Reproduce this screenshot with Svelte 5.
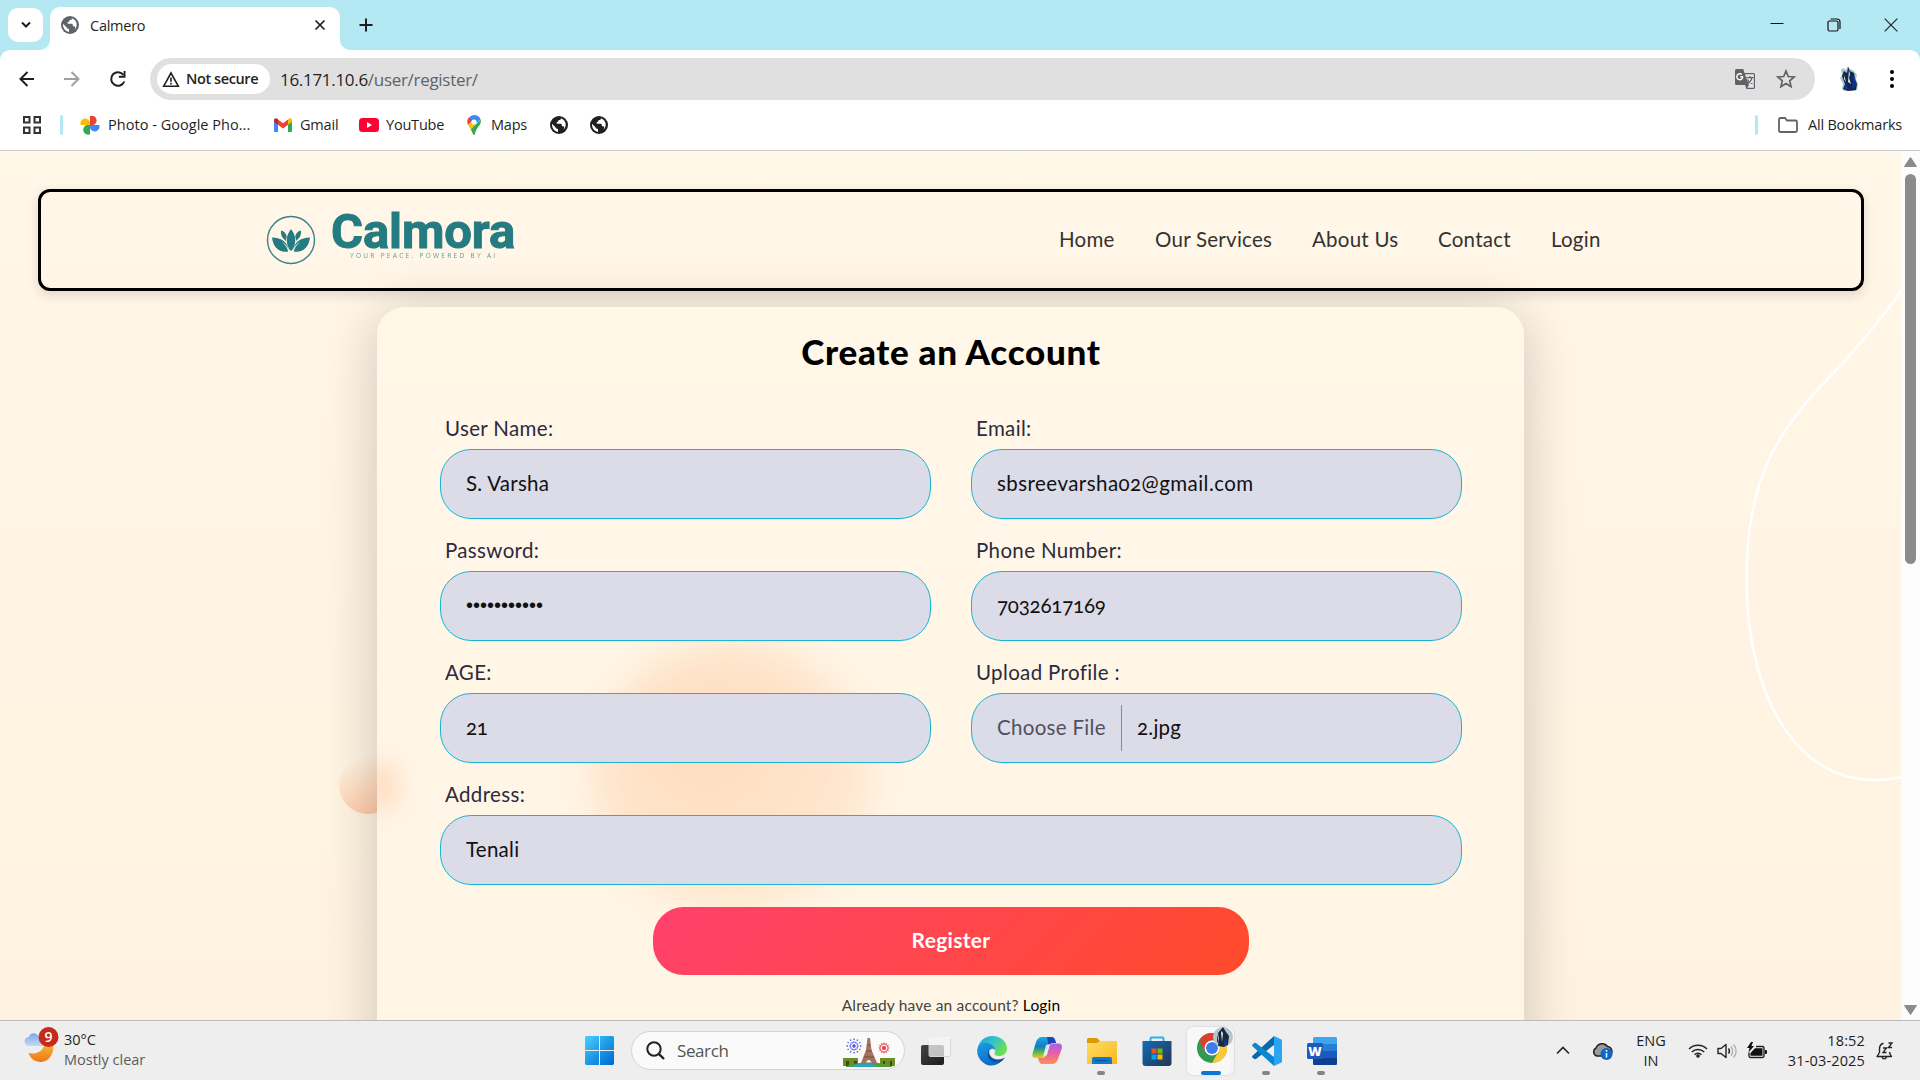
<script>
  const nav = [
    { label: 'Home', cls: 'n1' },
    { label: 'Our Services', cls: 'n2' },
    { label: 'About Us', cls: 'n3' },
    { label: 'Contact', cls: 'n4' },
    { label: 'Login', cls: 'n5' }
  ];
  const fields = [
    { label: 'User Name:', value: 'S. Varsha' },
    { label: 'Email:', value: 'sbsreevarsha02@gmail.com', kind: 'email' },
    { label: 'Password:', value: '•••••••••••', kind: 'password' },
    { label: 'Phone Number:', value: '7032617169', kind: 'digits' },
    { label: 'AGE:', value: '21', kind: 'digits' },
    { label: 'Upload Profile :', value: '2.jpg', kind: 'file' },
    { label: 'Address:', value: 'Tenali', kind: 'wide' }
  ];
  // Firework rays in the search box artwork
  const rays = Array.from({ length: 12 }, (_, i) => i * 30);
</script>

{#snippet globe(color)}
  <svg class="globe" viewBox="0 0 20 20" width="20" height="20">
    <circle cx="10" cy="10" r="9" fill={color} />
    <path d="M3 8.800 6.500 12.300c.4.500.3 1 .8 1.300l1.700.4v2.900C5.500 16.500 2.600 13 3 8.800zM11.800 3.200c.3 1.300-.6 1.800-1.800 1.800-.8 0-.6 1-.8 1.600-.3.700-1.700.4-1.700 1.200 0 .9.500 1 1.500 1h2.800c1 0 1 .8 1 1.600 0 .7.400.9 1 .9 1.200 0 1.500.6 1.300 1.500l-.4 1.700c3-3.200 3.200-9-2.900-11.300z" fill="#fff" />
  </svg>
{/snippet}

<div class="screen">
  <header class="tabs">
    <div class="tab-search">
      <svg width="12" height="12" viewBox="0 0 12 12"><path d="m2 3.500 4 4 4-4" fill="none" stroke="#1f1f1f" stroke-width="2" /></svg>
    </div>
    <div class="tab">
      <svg class="flare left" width="10" height="10"><path d="M10 0v10H0A10 10 0 0 0 10 0" fill="#fff" /></svg>
      {@render globe('#5f6368')}
      <span class="tab-title">Calmero</span>
      <svg class="tab-close" width="12" height="12"><path d="m1.500 1.500 9 9m0-9-9 9" stroke="#1f1f1f" stroke-width="1.700" /></svg>
      <svg class="flare right" width="10" height="10"><path d="M0 0v10h10A10 10 0 0 1 0 0" fill="#fff" /></svg>
    </div>
    <svg class="plus" width="14" height="14"><path d="M7 .5v13M.5 7h13" stroke="#1f1f1f" stroke-width="2" /></svg>
    <div class="window-buttons">
      <svg width="14" height="14"><path d="M.5 5.500h13" stroke="#111" /></svg>
      <svg width="14" height="14"><path d="M1 4.500a1.500 1.500 0 0 1 1.500-1.500h7A1.500 1.500 0 0 1 11 4.500v7a1.500 1.500 0 0 1-1.500 1.500h-7A1.500 1.500 0 0 1 1 11.500zM3.500 1h6.500a3 3 0 0 1 3 3v7" fill="none" stroke="#111" stroke-width="1.200" /></svg>
      <svg width="14" height="14"><path d="m.7.7 12.600 12.600m0-12.600L.7 13.300" stroke="#222" stroke-width="1.200" /></svg>
    </div>
  </header>

  <div class="toolbar">
    <svg class="back" width="18" height="18"><path d="M16 9H3m6.500-7L2.500 9l7 7" fill="none" stroke="#1f1f1f" stroke-width="2" /></svg>
    <svg class="forward" width="18" height="18"><path d="M1 9h14M8.500 2l7 7-7 7" fill="none" stroke="#a0a0a0" stroke-width="2" /></svg>
    <svg class="reload" width="18" height="18"><path d="M15.300 11.500A6.800 6.800 0 1 1 14.500 5" fill="none" stroke="#1f1f1f" stroke-width="2" /><path d="M16.500 1v6.700H9.900V5.800h4.700V1z" fill="#1f1f1f" /></svg>
    <div class="omnibox">
      <div class="chip">
        <svg width="18" height="17"><path d="M9 2 1.700 15.200h14.600z" fill="none" stroke="#1f1f1f" stroke-width="1.600" /><path d="M9 6.500v4.200M9 11.700v1.800" stroke="#1f1f1f" stroke-width="1.600" /></svg>
        <span>Not secure</span>
      </div>
      <span class="url"><b>16.171.10.6</b>/user/register/</span>
      <svg class="translate" width="22" height="22">
        <path d="M2.500 1h6.800l1.200 4H19.500a1.500 1.500 0 0 1 1.500 1.500v13a1.500 1.500 0 0 1-1.500 1.500h-7L11 17H2.500A1.500 1.500 0 0 1 1 15.500v-13A1.500 1.500 0 0 1 2.500 1" fill="#5f6368" />
        <path d="M11 6.300h8.800v13.500h-6.500L15 17z" fill="#e6e6e6" />
        <path d="M9 8.800H6.300M8.800 8.800a3 3 0 1 1-1-2.300" fill="none" stroke="#fff" stroke-width="1.400" />
        <path d="M12.500 9.700h7M16 8v1.700m2 0c-.6 3-2.500 4.800-4.800 5.800m.3-4c1 2 2.700 3.500 5 4.300" fill="none" stroke="#5f6368" stroke-width="1.200" />
      </svg>
      <svg class="star" width="20" height="20"><path d="m10 2 2.300 5.500 5.900.5-4.500 3.900 1.400 5.800L10 14.600l-5.100 3.100 1.400-5.800L1.800 8l5.900-.5z" fill="none" stroke="#5f6368" stroke-width="1.700" /></svg>
    </div>
    <svg class="avatar" width="20" height="26">
      <path d="M2 4 4 2 7 4 9 0l2 3 4 2 3 4-1 4 2 5-1 6-4 1H5L3 23l1-5-3-6 2-3z" fill="#a9c6cb" />
      <path d="m9 1 2 4 4 2 1 6 2 5-1 6-8 1-5-2 2-5-3-8 2-5 3 2z" fill="#14264a" />
      <path d="m10 4 1 4-1 4 2 6-3-2zM5 9l2 7-2-3z" fill="#dce7ec" />
      <path d="m12 10 2 4-1 9 4-3-1-8zM7 17l3 7-5-2z" fill="#0836a0" />
    </svg>
    <svg class="dots" width="6" height="22"><circle cx="3" cy="3" r="2" /><circle cx="3" cy="10" r="2" /><circle cx="3" cy="17" r="2" /></svg>
  </div>

  <div class="bookmarks">
    <svg class="apps" width="18" height="18"><path d="M1 1h5.500v5.500H1zM11.500 1H17v5.500h-5.500zM1 11.500h5.500V17H1zM11.500 11.500H17V17h-5.500z" fill="none" stroke="#333" stroke-width="2" /></svg>
    <i class="sep"></i>
    <svg class="photos" width="20" height="20"><path d="M10 10V1a4.700 4.700 0 0 1 3.500 9z" fill="#ea4335" /><path d="M10 10h9.300a4.700 4.700 0 0 1-9.300 3z" fill="#4285f4" /><path d="M10 10v9.300a4.700 4.700 0 0 1-3.500-9.300z" fill="#34a853" /><path d="M10 10H.7A4.700 4.700 0 0 1 10 7z" fill="#fbbc04" /></svg>
    <span class="b1">Photo - Google Pho...</span>
    <svg class="gmail" width="18" height="14"><path d="M0 2.500V12.500A1.300 1.300 0 0 0 1.300 14H4V5z" fill="#4285f4" /><path d="M14 5v9h2.700A1.300 1.300 0 0 0 18 12.700V2.500z" fill="#34a853" /><path d="M4 1.500 9 5.300l5-3.800V6.800L9 10.500 4 6.800z" fill="#ea4335" /><path d="M0 2.500C0 .5 2-.5 4 1.200v5.600L0 3.800z" fill="#c5221f" /><path d="M18 2.500c0-2-2-3-4-1.300v5.600l4-3z" fill="#fbbc04" /></svg>
    <span class="b2">Gmail</span>
    <svg class="yt" width="20" height="14"><rect width="20" height="14" rx="3.500" fill="#f03" /><path d="m8 4 5 3-5 3z" fill="#fff" /></svg>
    <span class="b3">YouTube</span>
    <svg class="pin" width="14" height="20"><path d="M7 0a7 7 0 0 1 6.600 4.500L5 12 1 5A7 7 0 0 1 7 0" fill="#4285f4" /><path d="M1.800 2.500 5 5.500 1.200 10A7 7 0 0 1 1.800 2.500" fill="#ea4335" /><path d="M1.200 10 5 5.500l4.500 3-5.700 6z" fill="#fbbc04" /><path d="M13.600 4.500C15 9 11 11.500 9.500 14.500 8.300 16.500 8.200 20 7 20s-1.500-3-3.200-5.500z" fill="#34a853" /><circle cx="7" cy="7" r="2.600" fill="#fff" /></svg>
    <span class="b4">Maps</span>
    {@render globe('#1f1f1f')}
    <span class="globe-gap"></span>
    {@render globe('#1f1f1f')}
    <i class="sep right-sep"></i>
    <svg class="folder" width="20" height="16"><path d="M1 13.500V2.500A1.500 1.500 0 0 1 2.500 1H7l2 2.500h8.500A1.500 1.500 0 0 1 19 5v8.500a1.500 1.500 0 0 1-1.500 1.500h-15A1.500 1.500 0 0 1 1 13.500z" fill="none" stroke="#5f6368" stroke-width="1.800" /></svg>
    <span class="b5">All Bookmarks</span>
  </div>

  <main class="viewport">
    <div class="page">
      <svg class="curve" width="160" height="520"><path d="M158 0C140 25 112 60 78 95 34 141 3 190 2.500 286 2 415 60 508 158 487" fill="none" stroke="#fff" stroke-width="2.600" /></svg>
      <i class="dot"></i>
      <nav class="navbar">
        <div class="logo">
          <svg class="lotus" width="50" height="50" viewBox="0 0 50 50">
            <circle cx="25" cy="25" r="23.500" fill="none" stroke="#388288" stroke-width="1.400" />
            <g fill="#247b81">
              <path d="M25 14c5.500 7 5.500 14 1 21.500h-2C19.500 28 19.500 21 25 14z" />
              <path d="M15 15.500c4 1 5.500 4 5.800 6.500-.8 1.500-.8 3-.8 4-3-2.500-5.500-5-5-10.500zM35 15.500c-4 1-5.500 4-5.800 6.500.8 1.500.8 3 .8 4 3-2.500 5.500-5 5-10.500z" />
              <path d="M6 22.500c10 0 15.500 5 17 13-1.200-4-3.500-6.500-7-8.500 3 2.500 5.500 5.500 6.200 9.500C13 38 7 32 6 22.500zM44 22.500c-10 0-15.500 5-17 13 1.200-4 3.500-6.500 7-8.500-3 2.500-5.500 5.500-6.200 9.500C37 38 43 32 44 22.500z" />
            </g>
          </svg>
          <div class="wordmark">
            <strong>Calmora</strong>
            <small>YOUR PEACE. POWERED BY AI</small>
          </div>
        </div>
        <div class="links">
          {#each nav as item}<a class={item.cls} href="#top">{item.label}</a>{/each}
        </div>
      </nav>

      <section class="card">
        <i class="glow big"></i>
        <i class="glow small"></i>
        <h1>Create an Account</h1>
        <div class="form">
          {#each fields as f}
            <div class="field {f.kind ?? ''}">
              <span class="label">{f.label}</span>
              <div class="input">
                {#if f.kind === 'file'}<span class="choose">Choose File</span>{/if}
                <span class="value">{f.value}</span>
              </div>
            </div>
          {/each}
        </div>
        <div class="register">Register</div>
        <p class="already">Already have an account? <b>Login</b></p>
      </section>
    </div>
    <div class="scrollbar">
      <svg width="13" height="10"><path d="M6.500.5 12.500 9.500H.5z" fill="#8b8b8b" stroke="#8b8b8b" stroke-linejoin="round" /></svg>
      <div class="thumb"></div>
      <svg class="down" width="13" height="10"><path d="M6.500 9.500 12.500.5H.5z" fill="#8b8b8b" stroke="#8b8b8b" stroke-linejoin="round" /></svg>
    </div>
  </main>

  <footer class="taskbar">
    <div class="weather">
      <svg width="36" height="38" viewBox="0 0 36 38">
        <defs>
          <linearGradient id="moon" x2="0" y2="1"><stop stop-color="#f9bb3c" /><stop offset="1" stop-color="#ec7615" /></linearGradient>
          <linearGradient id="cloud" x2="0" y2="1"><stop stop-color="#7ea6e8" /><stop offset="1" stop-color="#c4d9f8" /></linearGradient>
        </defs>
        <path d="M28.500 15c3 10-3 20-12 20-6 0-10-3.500-12-9 10 2 16-3 16-11z" fill="url(#moon)" />
        <path d="M5 19a4.500 4.500 0 0 1 0-9C6 5 13 5 15 10h4v9z" fill="url(#cloud)" />
        <circle cx="24.500" cy="10" r="10" fill="#c42b1c" />
        <text x="24.500" y="15" text-anchor="middle" class="badge">9</text>
      </svg>
      <div class="weather-text"><span>30°C</span><span class="grey">Mostly clear</span></div>
    </div>

    <div class="dock">
      <svg class="start" width="29" height="29">
        <defs><linearGradient id="win" x2="1" y2="1"><stop stop-color="#4cd0fb" /><stop offset=".5" stop-color="#1f9ae6" /><stop offset="1" stop-color="#0067cf" /></linearGradient></defs>
        <path d="M1 0h13v14H0V1zM15 0h13l1 1v13H15zM0 15h14v14H1l-1-1zM15 15h14v13l-1 1H15z" fill="url(#win)" />
      </svg>
      <div class="searchbox">
        <svg width="19" height="19"><circle cx="8" cy="8" r="6.700" fill="none" stroke="#222" stroke-width="2" /><path d="m12.800 12.800 5.200 5.200" stroke="#222" stroke-width="2.400" /></svg>
        <span>Search</span>
        <svg class="art" width="52" height="31">
          <path d="M0 21h15v8H0zM37 21h15v8H37z" fill="#6c8e22" />
          <path d="M3 24h3v5H3zM11 24h3v5h-3zM40 24h2v5h-2zM47 24h2v5h-2z" fill="#3e4a16" />
          <path d="M2 30c8-6 40-6 48 0z" fill="#519a3a" />
          <path d="M8 30c7-4 13-4 22-3l4 3z" fill="#2ea4bc" />
          <path d="M24.500 1h2.500l1.500 12L34 26h-5.500c-1-4-4.500-4-5.500 0h-5l5-13z" fill="#a5735d" />
          <path d="M24.500 8h3M23 14h6M21 20h10" stroke="#6f5146" />
          <g stroke="#5a5ae8" stroke-width="1.400" stroke-dasharray="1.500 1.500">{#each rays as r}<path d="M11 9V1" transform="rotate({r} 11 9)" />{/each}</g>
          <g stroke="#e84a50" stroke-width="1.500" stroke-dasharray="2 1.200">{#each rays as r}<path d="M41 11V5" transform="rotate({r} 41 11)" />{/each}</g>
        </svg>
      </div>
      <svg class="taskview" width="30" height="28">
        <defs><linearGradient id="tv" x2="1" y2="1"><stop stop-color="#454542" /><stop offset="1" stop-color="#1c1c1b" /></linearGradient></defs>
        <rect y="8" width="23" height="20" rx="2" fill="url(#tv)" /><rect x="7.500" width="22.500" height="20" rx="2" fill="#f4f4f4" fill-opacity=".75" /><path d="M29.500 2v16a1.500 1.500 0 0 1-1.500 1.500H9" fill="none" stroke="#d6d6d6" />
      </svg>

      <div class="app">
        <svg width="30" height="30">
          <defs>
            <linearGradient id="e1" x2="1" y2=".6"><stop stop-color="#1a9fdc" /><stop offset=".5" stop-color="#35c1c9" /><stop offset="1" stop-color="#6be34b" /></linearGradient>
            <linearGradient id="e2" x2=".4" y2="1"><stop stop-color="#1b9de2" /><stop offset="1" stop-color="#0a6dca" /></linearGradient>
          </defs>
          <path d="M.7 12C2 5 8 0 15 0c9 0 15 6 15 12.500 0 5-4 7.500-7.500 7.500-3.500 0-5.500-1.200-5-2.500 1.500-2.500 1-7-4.500-7.500z" fill="url(#e1)" />
          <path d="M.2 14C1 8 6 6.500 10 7c5 .5 8 4 8 7.500-2-3.500-7-1-6 4 1 6 7 9 13 6-5 6-14 7-19.500 1.500A15 15 0 0 1 .2 14z" fill="url(#e2)" />
          <path d="M12 14c-4 7 2 14 11 12 2-.7 4-2.700 5-4.500-5 3-12 2.500-14.500-1.500-1.300-2-1.500-4-1.500-6z" fill="#114f96" />
        </svg>
      </div>
      <div class="app">
        <svg width="30" height="28">
          <defs>
            <linearGradient id="c1" x2="0" y2="1"><stop stop-color="#19a9e6" /><stop offset=".45" stop-color="#1679c9" /><stop offset=".7" stop-color="#4fb54e" /><stop offset="1" stop-color="#f1ca1c" /></linearGradient>
            <linearGradient id="c2" x2="0" y2="1"><stop stop-color="#a862ec" /><stop offset=".5" stop-color="#e95fa3" /><stop offset="1" stop-color="#fb9254" /></linearGradient>
          </defs>
          <path d="M10 0h10c2 0 3 2 4 6h-3c-3 0-3.500 1.500-4.500 4.500l-2.500 7C13 20 12 21 10 21H3c-3 0-3-3-2-6L4 5c1-3 3-5 6-5z" fill="url(#c1)" />
          <path d="M15 0h5c2 0 3 2 4 6h-3c-2.500 0-3.500 1-4.200 3z" fill="#2145b5" />
          <path d="M20 27H10c-2 0-3-2-4-6h4c3 0 3.500-1.500 4.500-4.500l2.500-7c.8-2 2-3 4-3h6c3 0 3.500 3 2.500 6L26 22c-1 3-3 5-6 5z" fill="url(#c2)" />
          <path d="m14 8 4-1-3 11-4 2z" fill="#fff" opacity=".8" />
        </svg>
      </div>
      <div class="app open">
        <svg width="30" height="28">
          <defs><linearGradient id="f1" x2="1" y2="1"><stop stop-color="#ffdc65" /><stop offset="1" stop-color="#f9b81d" /></linearGradient></defs>
          <path d="M0 2.500A1.500 1.500 0 0 1 1.500 1H10l3 3v6H0z" fill="#d99a06" /><path d="M0 6h10l3-2h17v23H0z" fill="url(#f1)" />
          <path d="M5 27v-5a2 2 0 0 1 2-2h16a2 2 0 0 1 2 2v5z" fill="#0f79cf" /><path d="M8.500 23.500h13" stroke="#09529b" stroke-width="1.200" />
        </svg>
      </div>
      <div class="app">
        <svg width="30" height="30">
          <defs><linearGradient id="s1" x2="1" y2="1"><stop stop-color="#126cb6" /><stop offset="1" stop-color="#253454" /></linearGradient></defs>
          <path d="M8.500 6V2.500a1 1 0 0 1 1-1h11a1 1 0 0 1 1 1V6" fill="none" stroke="#25b4f0" stroke-width="2" />
          <path d="M.5 5h29v22a3 3 0 0 1-3 3h-23a3 3 0 0 1-3-3z" fill="url(#s1)" />
          <path d="M9.500 12.500h5v5h-5z" fill="#f25022" /><path d="M15.500 12.500h5v5h-5z" fill="#7fba00" /><path d="M9.500 18.500h5v5h-5z" fill="#00a4ef" /><path d="M15.500 18.500h5v5h-5z" fill="#ffb900" />
        </svg>
      </div>
      <div class="app active">
        <svg width="38" height="40">
          <g transform="translate(0 8)">
            <circle cx="15" cy="15" r="15" fill="#34994f" />
            <path d="M2 7.500A15 15 0 0 1 28 7.500H15z" fill="#e23c30" /><path d="M2 7.500 8.500 19 15 15V7.500z" fill="#e23c30" />
            <path d="M28 7.500A15 15 0 0 1 15 30l6.500-11.500L15 7.500z" fill="#fcc934" />
            <circle cx="15" cy="15" r="7.500" fill="#fff" /><circle cx="15" cy="15" r="6" fill="#3b7ded" />
          </g>
          <circle cx="26" cy="12" r="10" fill="#b8c6cb" /><path d="m26 2 3 5 3 4-1 8-4 3-6-1 1-7-1-6z" fill="#1a2a3e" /><path d="m28 12 3 8-5 2zM20 9l2 9-2-1z" fill="#17397b" /><path d="m24 6 2 2-1 9z" fill="#f4f7f8" />
        </svg>
      </div>
      <div class="app open">
        <svg width="30" height="30">
          <path d="M22 0v9L4 23l-1.500.3L.3 21.200c-.4-.6-.3-1 .2-1.500z" fill="#0a69ad" />
          <path d="M22 30v-9L4 7l-1.500-.3L.3 8.800c-.4.600-.3 1 .2 1.500z" fill="#0e85cf" />
          <path d="M22 0 29 3.200a1.600 1.600 0 0 1 1 1.500v20.600a1.600 1.600 0 0 1-1 1.500L22 30z" fill="#2aa5f2" />
        </svg>
      </div>
      <div class="app open">
        <svg width="30" height="28">
          <rect x="6" width="24" height="28" rx="1.500" fill="#41a5ee" /><path d="M6 7h24v7H6z" fill="#2b7cd3" /><path d="M6 14h24v7H6z" fill="#185abd" /><path d="M6 21h24v5.500a1.500 1.500 0 0 1-1.500 1.500h-21A1.500 1.500 0 0 1 6 26.500z" fill="#103f91" />
          <rect y="6" width="16" height="16" rx="1.500" fill="#1c5bbb" /><text x="8" y="18.500" text-anchor="middle" class="word">W</text>
        </svg>
      </div>
    </div>

    <div class="tray">
      <svg class="chev" width="14" height="9"><path d="m1 7.500 6-6 6 6" fill="none" stroke="#222" stroke-width="1.600" /></svg>
      <svg class="onedrive" width="21" height="18"><path d="M5 14A4.300 4.300 0 0 1 4 6 6.500 6.500 0 0 1 15.500 4.500 5 5 0 0 1 17 14z" fill="#9a9a9a" stroke="#222" stroke-width="1.500" /><circle cx="14.500" cy="12" r="6" fill="#0a67c4" /><path d="M14.500 8v1.800m0 1.200v4.500" stroke="#fff" stroke-width="1.600" /></svg>
      <div class="lang"><span>ENG</span><span>IN</span></div>
      <svg class="wifi" width="20" height="15"><g fill="none" stroke="#222" stroke-width="1.500"><path d="M1 6a12.800 12.800 0 0 1 18 0M3.800 9a8.700 8.700 0 0 1 12.400 0M6.600 11.700a4.800 4.800 0 0 1 6.800 0" /></g><circle cx="10" cy="13" r="1.800" fill="#222" /></svg>
      <svg class="vol" width="20" height="16"><path d="M1 5.500h3L9 1.500v13l-5-4H1z" fill="none" stroke="#222" stroke-width="1.400" stroke-linejoin="round" /><path d="M11.500 5.500c1.200 1.500 1.200 3.500 0 5" fill="none" stroke="#222" stroke-width="1.400" /><path d="M14 3.500c2.200 2.500 2.200 6.500 0 9M16.500 1.500c3.500 3.500 3.500 9.500 0 13" fill="none" stroke="#aaa" stroke-width="1.200" /></svg>
      <svg class="batt" width="20" height="17"><path d="M9 4.500h6.500A1.500 1.500 0 0 1 17 6v8a1.500 1.500 0 0 1-1.500 1.500h-12A1.500 1.500 0 0 1 2 14v-3.500" fill="none" stroke="#222" stroke-width="1.400" /><path d="M8 6.200h7.500v7.600h-12V11zM18 8h1a1 1 0 0 1 1 1v2a1 1 0 0 1-1 1h-1z" fill="#111" /><path d="M4 0 0 6h2.500L1.500 10.500 7 4H4.500L6 0z" fill="#111" /></svg>
      <div class="clock"><span>18:52</span><span>31-03-2025</span></div>
      <svg class="bell" width="18" height="18"><path d="M7.500 1.200C4.500 2 3.500 4 3.500 7v3.500L1 14.500h14.500l-1.800-3V10" fill="none" stroke="#222" stroke-width="1.400" stroke-linejoin="round" /><path d="M6 15c.8 2.500 3.700 2.500 4.500 0M7 6h3.500L7 10.500h3.500M12.500 1H16l-3.500 4.500H16" fill="none" stroke="#222" stroke-width="1.300" /></svg>
    </div>
  </footer>
</div>

<style>
  :global(body) { margin: 0; overflow: hidden; }
  .screen { width: 1920px; height: 1080px; display: flex; flex-direction: column; font-family: 'Open Sans', 'Noto Sans', sans-serif; color: #1f1f1f; background: #b4e8f2; overflow: hidden; }
  svg { display: block; flex: none; }
  span, a { white-space: nowrap; }

  .tabs { height: 50px; display: flex; align-items: center; box-sizing: border-box; padding-left: 8px; flex: none; }
  .tab-search { width: 35px; height: 34px; border-radius: 10px; background: #fff; display: grid; place-items: center; margin-right: 7px; }
  .tab { position: relative; width: 290px; height: 43px; margin-top: 7px; border-radius: 10px 10px 0 0; background: #fff; box-sizing: border-box; padding: 0 14px 7px 10px; display: flex; align-items: center; }
  .flare { position: absolute; bottom: 0; }
  .flare.left { left: -10px; }
  .flare.right { right: -10px; }
  .tab-title { font-size: 14.500px; margin-left: 10px; letter-spacing: -0.250px; }
  .tab-close { margin-left: auto; }
  .plus { margin-left: 19px; }
  .window-buttons { display: flex; gap: 43px; margin: 0 22px 0 auto; }

  .toolbar { height: 50px; flex: none; background: #fff; border-radius: 10px 10px 0 0; display: flex; align-items: center; padding-top: 8px; box-sizing: border-box; }
  .back { margin-left: 18px; }
  .forward { margin-left: 27px; }
  .reload { margin-left: 28px; }
  .omnibox { width: 1665px; height: 42px; margin-left: 23px; border-radius: 21px; background: #e0e0e0; display: flex; align-items: center; box-sizing: border-box; padding-left: 7px; }
  .chip { width: 113px; height: 30px; border-radius: 15px; background: #fff; display: flex; align-items: center; gap: 7px; padding-left: 5px; box-sizing: border-box; font-size: 14.500px; font-weight: 600; letter-spacing: -0.400px; }
  .chip span { margin: -2px 0 0 -1px; }
  .url { margin-left: 10px; font-size: 17px; color: #5f6368; letter-spacing: -0.300px; }
  .url b { font-weight: 400; color: #1f1f1f; }
  .translate { margin-left: auto; }
  .star { margin: 0 19px 0 20px; }
  .avatar { margin-left: 24px; }
  .dots { margin-left: 30px; margin-top: 2px; }

  .bookmarks { height: 51px; flex: none; background: #fff; border-bottom: 1px solid #c8c9ca; box-sizing: border-box; display: flex; align-items: center; padding-left: 23px; font-size: 14.500px; letter-spacing: -0.200px; }
  .bookmarks span { margin-top: -2px; }
  .sep { width: 3px; height: 20px; border-radius: 2px; background: #b4e8f2; margin-left: 19px; }
  .photos { margin-left: 17px; }
  .b1 { width: 166px; margin-left: 8px; letter-spacing: 0.030px; }
  .b2 { width: 59px; margin-left: 8px; }
  .b3 { width: 81px; margin-left: 7px; }
  .b4 { width: 58px; margin-left: 10px; }
  .globe-gap { width: 20px; }
  .right-sep { margin-left: auto; }
  .folder { margin-left: 20px; }
  .b5 { width: 112px; margin-left: 10px; }

  .viewport { height: 869px; flex: none; display: flex; }
  .page { position: relative; width: 1901px; height: 869px; overflow: hidden; background: linear-gradient(#fff7e8, #fff2e0); box-sizing: border-box; padding-top: 38px; font-family: Lato, 'Open Sans', sans-serif; }
  .curve { position: absolute; left: 1744px; top: 139px; }
  .dot { position: absolute; left: 339px; top: 605px; width: 58px; height: 58px; border-radius: 50%; background: linear-gradient(155deg, rgba(255, 214, 184, 0) 12%, #ffcaa6 85%); }
  .navbar { position: relative; z-index: 1; width: 1826px; height: 102px; margin-left: 38px; border: 3px solid #000; border-radius: 12px; box-sizing: border-box; display: flex; align-items: center; justify-content: space-between; padding: 0 256px 0 225px; box-shadow: 0 4px 12px rgba(60, 30, 30, 0.150); }
  .logo { display: flex; align-items: center; gap: 15px; }
  .wordmark { display: flex; flex-direction: column; color: #247b81; margin-top: -9px; }
  .wordmark strong { font: 700 49px/41px Roboto, sans-serif; letter-spacing: -0.100px; -webkit-text-stroke: 1px #247b81; }
  .wordmark small { font: 400 6.500px/8px 'Open Sans', sans-serif; letter-spacing: 2.300px; margin: 0 0 0 19px; opacity: 0.750; }
  .links { display: flex; font-size: 20.500px; letter-spacing: 0.250px; margin-top: -2px; }
  .links a { color: #333; text-decoration: none; }
  .n1 { width: 96px; }
  .n2 { width: 157px; }
  .n3 { width: 126px; }
  .n4 { width: 113px; }
  .n5 { width: 54px; }

  .card { position: relative; width: 1147px; height: 800px; margin: 16px 0 0 377px; border-radius: 28px; background: linear-gradient(#fff7e8, #fff5e5); box-shadow: 0 6px 56px rgba(0, 0, 0, 0.200); box-sizing: border-box; padding: 21px 62px 0 63px; }
  .glow { position: absolute; border-radius: 50%; }
  .big { left: 214px; top: 335px; width: 282px; height: 268px; background: radial-gradient(circle at 42% 38%, #ffdcbe, #ffe9d3 80%); filter: blur(18px); }
  .small { left: -12px; top: 454px; width: 34px; height: 50px; background: #ffdcc0; filter: blur(12px); clip-path: inset(-60px -60px -60px 12px); }
  h1 { position: relative; margin: 0; text-align: center; font-size: 35px; line-height: 46px; font-weight: 900; color: #000; letter-spacing: 0.700px; }
  .form { position: relative; margin-top: 33px; display: grid; grid-template-columns: 491px 491px; column-gap: 40px; row-gap: 10px; justify-content: center; }
  .wide { grid-column: 1 / 3; }
  .label { display: block; height: 42px; line-height: 43px; font-size: 20.500px; padding-left: 5px; color: #2b2b3d; letter-spacing: 0.350px; }
  .input { height: 70px; box-sizing: border-box; border: 1px solid #19b5d3; border-radius: 31px; background: #dcdbe8; display: flex; align-items: center; padding: 0 0 2px 25px; font-size: 20.500px; color: #111; letter-spacing: 0.250px; font-variant-numeric: oldstyle-nums; }
  .email .value { letter-spacing: 0.450px; }
  .digits .value { letter-spacing: -0.200px; }
  .password .value { font-family: 'Liberation Sans', sans-serif; font-size: 20px; letter-spacing: 0; }
  .choose { height: 46px; line-height: 45px; width: 125px; border-right: 1px solid #19b5d3; margin: 2px 15px 0 0; color: #505060; box-sizing: border-box; letter-spacing: 0.300px; }
  .register { position: relative; width: 596px; height: 68px; border-radius: 31px; margin: 22px auto 0; background: linear-gradient(135deg, #ff416c, #ff4b2b); color: #fff; display: grid; place-items: center; font-size: 21px; line-height: 66px; font-weight: 700; letter-spacing: 0.300px; align-items: start; }
  .already { position: relative; margin: 19px 0 0; text-align: center; font-size: 15.500px; line-height: 22px; color: #444; letter-spacing: 0.180px; }
  .already b { font-weight: 400; color: #000; }

  .scrollbar { width: 19px; background: #fcfcfc; display: flex; flex-direction: column; align-items: center; padding: 6px 0 5px; box-sizing: border-box; }
  .thumb { width: 11px; height: 390px; margin-top: 7px; border-radius: 6px; background: #8b8b8b; }
  .down { margin-top: auto; }

  .taskbar { height: 60px; flex: none; background: #eee; border-top: 1px solid #bcbcbc; box-sizing: border-box; display: grid; grid-template-columns: 585px 765px 1fr; font-size: 15px; }
  .weather { display: flex; padding: 6px 0 0 24px; gap: 4px; }
  .weather-text { display: flex; flex-direction: column; line-height: 20px; padding-top: 3px; font-size: 14.500px; }
  .grey { color: #5c5c5c; }
  .badge { font: 600 14px 'Open Sans', sans-serif; fill: #fff; }
  .word { font: 800 13px 'Open Sans', sans-serif; fill: #fff; }
  .dock { display: flex; align-items: center; }
  .searchbox { flex: none; width: 274px; height: 39px; margin: 0 16px 0 17px; border: 1px solid #d4d4d4; border-radius: 20px; background: #fafafa; box-sizing: border-box; display: flex; align-items: center; padding: 0 9px 0 14px; font-size: 17px; color: #555; letter-spacing: -0.400px; }
  .searchbox span { margin-left: 12px; }
  .art { margin: 3px 0 0 auto; }
  .taskview { margin-right: 13px; }
  .app { position: relative; width: 55px; height: 58px; flex: none; display: grid; place-items: center; }
  .app.open::after, .app.active::after { content: ''; position: absolute; bottom: 5px; left: 23px; width: 8px; height: 4px; border-radius: 2px; background: #858585; }
  .app.active::after { left: 17px; width: 20px; background: #0b76d1; }
  .app.active { padding: 0 0 8px 8px; box-sizing: border-box; }
  .app.active::before { content: ''; position: absolute; left: 3px; top: 5px; width: 43px; height: 48px; border-radius: 6px; background: #f8f8f8; box-shadow: 4px 0 0 #f4f4f4, 5px 0 1px #ddd, 0 0 1px 1px #e2e2e2; }
  .app.active svg { position: relative; margin-top: -4px; }
  .tray { display: flex; align-items: center; padding-left: 206px; }
  .onedrive { margin-left: 22px; }
  .lang { width: 50px; margin-left: 13px; display: flex; flex-direction: column; align-items: center; line-height: 19.500px; font-size: 14.500px; }
  .wifi { margin-left: 12px; }
  .vol { margin-left: 9px; }
  .batt { margin-left: 10px; }
  .clock { width: 98px; display: flex; flex-direction: column; align-items: flex-end; line-height: 19.500px; font-size: 14.500px; letter-spacing: 0.150px; }
  .bell { margin-left: 11px; }
</style>
